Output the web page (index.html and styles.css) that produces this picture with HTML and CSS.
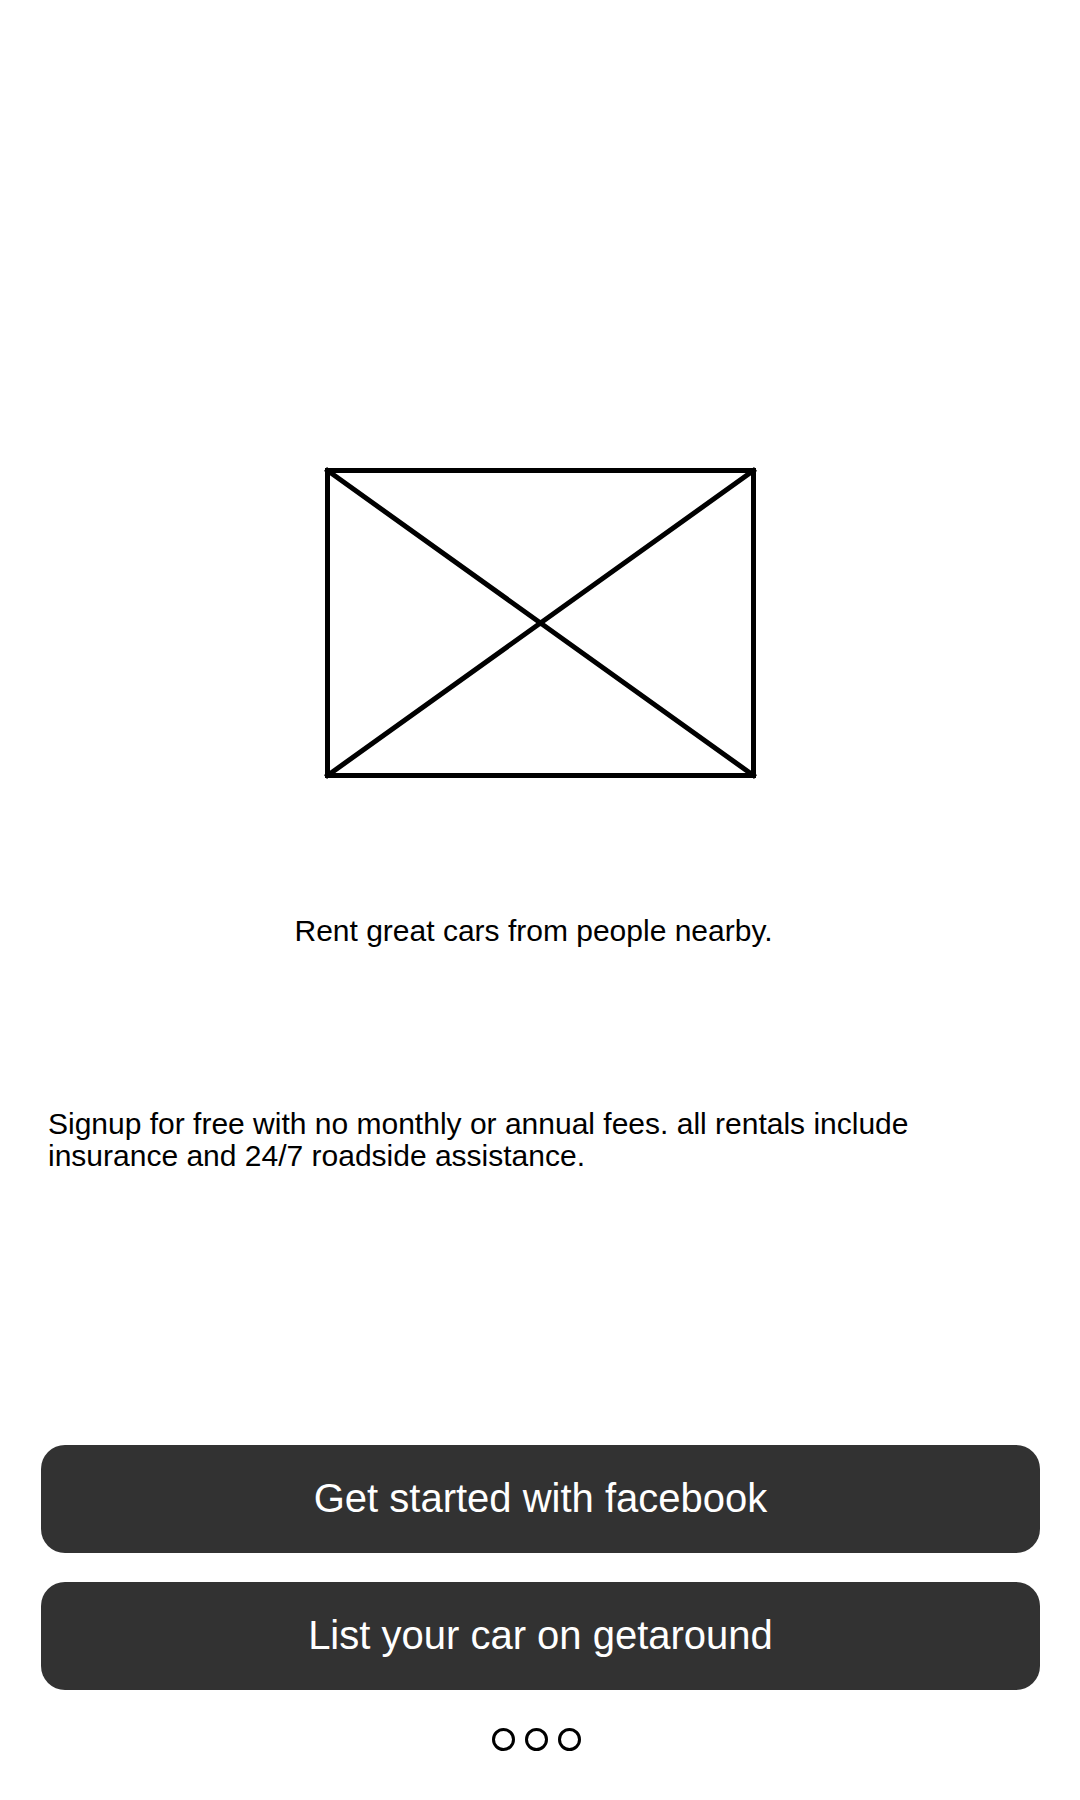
FILE: index.html
```html
<!DOCTYPE html>
<html lang="en">
<head>
<meta charset="utf-8">
<meta name="viewport" content="width=device-width, initial-scale=1">
<title>Rent great cars</title>
<link rel="stylesheet" href="styles.css">
</head>
<body>
<main class="welcome">
  <svg class="picture" width="435" height="314" viewBox="0 0 435 314" fill="none" stroke="#000" stroke-width="5" aria-hidden="true">
    <rect x="4.500" y="4.500" width="426" height="305"/>
    <path d="M4.500 4.500L430.500 309.500M430.500 4.500L4.500 309.500" stroke-linecap="square"/>
  </svg>
  <h1 class="title">Rent great cars from people nearby.</h1>
  <p class="intro">Signup for free with no monthly or annual fees. all rentals include insurance and 24/7 roadside assistance.</p>
  <div class="actions">
    <button class="action" type="button">Get started with facebook</button>
    <button class="action" type="button">List your car on getaround</button>
  </div>
  <div class="dots">
    <span class="dot"></span>
    <span class="dot"></span>
    <span class="dot"></span>
  </div>
</main>
</body>
</html>
```
FILE: styles.css
```css
body {
  margin: 0;
  background: #fff;
  color: #000;
  font-family: "Liberation Sans", Arial, sans-serif;
}

.welcome {
  display: flex;
  flex-direction: column;
  padding: 466px 40px 48px 41px;
}

.picture {
  align-self: center;
}

.title,
.intro {
  font-size: 30px;
  font-weight: 400;
  line-height: 32px;
}

.title {
  margin: 135px 0 0;
  padding-right: 14px;
  text-align: center;
}

.intro {
  margin: 161px 80px 0 7px;
}

.actions {
  display: flex;
  flex-direction: column;
  gap: 29px;
  margin-top: 273px;
}

.action {
  height: 108px;
  padding: 0 0 2px;
  border: 0;
  border-radius: 24px;
  background: #323232;
  color: #fff;
  font-family: inherit;
  font-size: 40px;
  line-height: 48px;
}

.dots {
  display: flex;
  justify-content: center;
  gap: 10px;
  margin-top: 38px;
  padding-right: 8px;
}

.dot {
  box-sizing: border-box;
  width: 23px;
  height: 23px;
  border: 3px solid #000;
  border-radius: 50%;
}
```
